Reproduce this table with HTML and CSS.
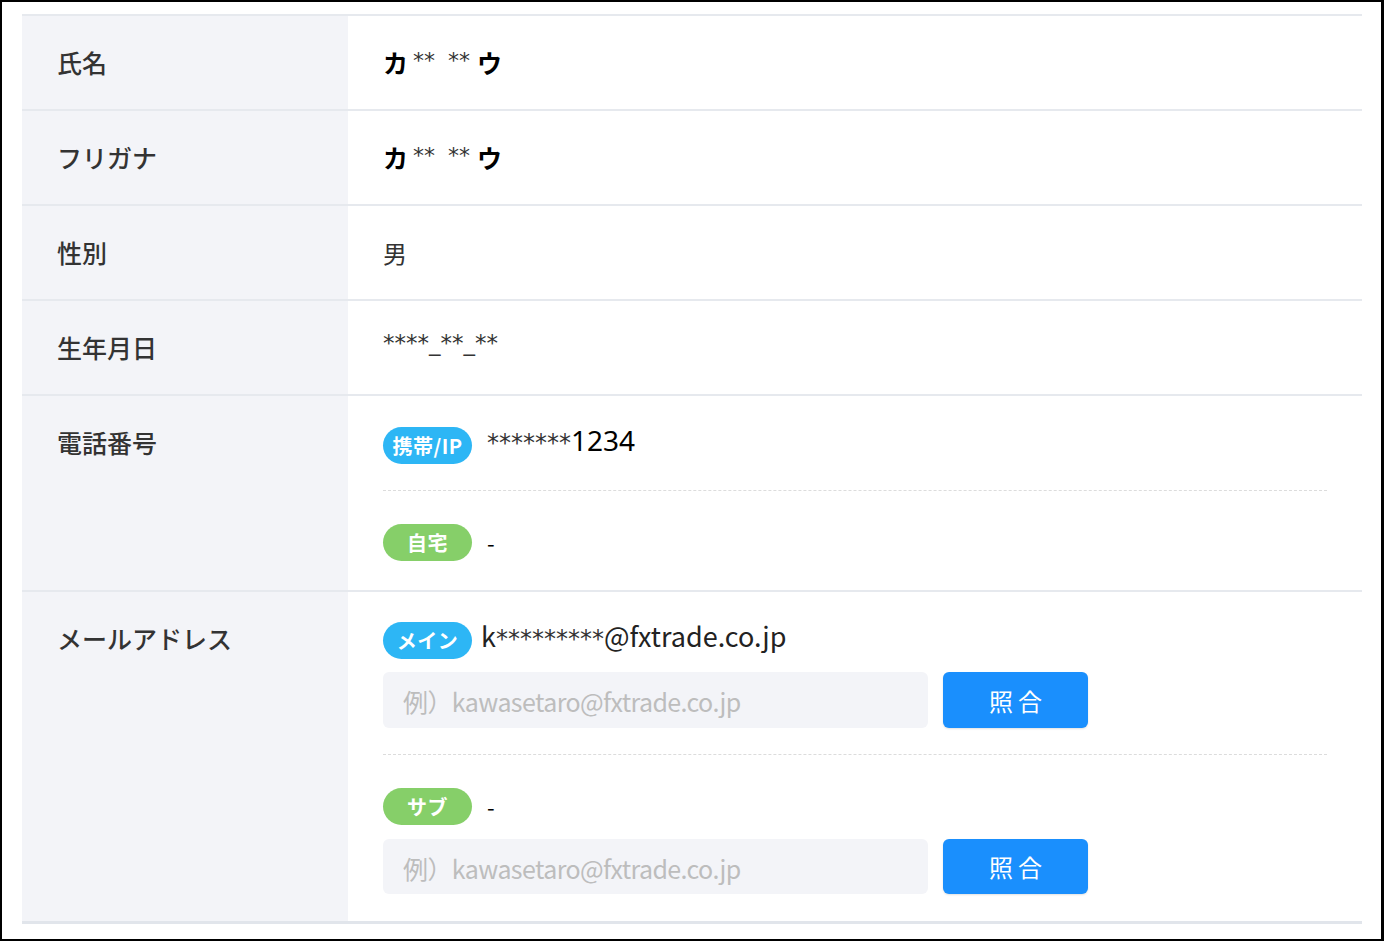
FILE: index.html
```html
<!DOCTYPE html>
<html lang="ja">
<head>
<meta charset="utf-8">
<link rel="stylesheet" href="styles.css">
</head>
<body>
<div class="frame">
  <div class="table">
    <div class="row">
      <div class="label">氏名</div>
      <div class="value"><span class="kana">カ</span><span class="mask">** **</span><span class="kana">ウ</span></div>
    </div>
    <div class="row">
      <div class="label">フリガナ</div>
      <div class="value"><span class="kana">カ</span><span class="mask">** **</span><span class="kana">ウ</span></div>
    </div>
    <div class="row">
      <div class="label">性別</div>
      <div class="value plain">男</div>
    </div>
    <div class="row">
      <div class="label">生年月日</div>
      <div class="value"><span class="date">****_**_**</span></div>
    </div>
    <div class="row">
      <div class="label">電話番号</div>
      <div class="value multi phone-list">
        <div class="item">
          <div class="line">
            <span class="badge blue">携帯/IP</span>
            <span class="phone"><span class="stars">*******</span><span class="digits">1234</span></span>
          </div>
        </div>
        <div class="item">
          <div class="line">
            <span class="badge green">自宅</span>
            <span class="dash">-</span>
          </div>
        </div>
      </div>
    </div>
    <div class="row">
      <div class="label">メールアドレス</div>
      <div class="value multi mail-list">
        <div class="item">
          <div class="line tall">
            <span class="badge blue">メイン</span>
            <span class="email">k<span class="stars">*********</span>@fxtrade.co.jp</span>
          </div>
          <div class="form">
            <input class="field" type="text" placeholder="例）kawasetaro@fxtrade.co.jp">
            <button class="btn" type="button">照合</button>
          </div>
        </div>
        <div class="item">
          <div class="line">
            <span class="badge green">サブ</span>
            <span class="dash">-</span>
          </div>
          <div class="form low">
            <input class="field" type="text" placeholder="例）kawasetaro@fxtrade.co.jp">
            <button class="btn" type="button">照合</button>
          </div>
        </div>
      </div>
    </div>
  </div>
</div>
</body>
</html>
```

FILE: styles.css
```css
* { box-sizing: border-box; }
html, body { margin: 0; padding: 0; background: #fff; }
body {
  font-family: "Noto Sans CJK JP", "Noto Sans", sans-serif;
  color: #333;
}
.frame {
  width: 1384px;
  height: 941px;
  border: 2px solid #000;
  border-right-width: 3px;
  padding: 12px 19px 0 20px;
  background: #fff;
}
.table {
  border-top: 2px solid #e6e9ee;
  border-bottom: 3px solid #e1e5eb;
}
.row {
  display: grid;
  grid-template-columns: 326px 1fr;
  border-bottom: 2px solid #e6e9ee;
}
.row:last-child { border-bottom: none; }
.label {
  background: #f3f4f8;
  padding: 30px 35px;
  font-size: 25px;
  line-height: 33px;
  font-weight: 500;
  color: #333;
}
.value {
  padding: 30px 35px;
  line-height: 33px;
  min-height: 93px;
  display: flex;
  align-items: center;
}
.value.multi {
  display: block;
  padding: 31px 35px 0 35px;
}
.value.mail-list { padding-top: 29px; }
.kana {
  font-size: 25px;
  font-weight: 700;
  color: #000;
}
.mask {
  font-family: "DejaVu Sans", sans-serif;
  font-size: 22px;
  color: #333;
  white-space: pre;
  word-spacing: 6px;
  margin: 0 7px 0 5px;
  position: relative;
  top: -2px;
}
.plain {
  font-size: 24px;
  color: #333;
}
.date {
  font-family: "DejaVu Sans", sans-serif;
  font-size: 23px;
  color: #333;
  position: relative;
  top: -4px;
}
.item {
  padding-bottom: 26px;
}
.item + .item {
  border-top: 1px dashed #dcdcdc;
  padding-top: 33px;
}
.phone-list .item + .item { padding-bottom: 29px; }
.mail-list .item + .item { padding-bottom: 27px; }
.line {
  display: flex;
  align-items: center;
  height: 37px;
}
.line.tall { height: 38px; }
.badge {
  flex: 0 0 auto;
  width: 89px;
  height: 37px;
  border-radius: 19px;
  color: #fff;
  font-size: 20px;
  font-weight: 700;
  line-height: 37px;
  text-align: center;
  letter-spacing: 0.5px;
}
.badge.blue { background: #2db6f5; }
.badge.green { background: #86cf69; }
.phone {
  margin-left: 15px;
  color: #000;
  position: relative;
  top: -3px;
  white-space: nowrap;
}
.stars {
  font-family: "DejaVu Sans", sans-serif;
  font-size: 24px;
  color: #333;
}
.digits {
  font-family: "Noto Sans", sans-serif;
  font-size: 28px;
  color: #000;
}
.dash {
  margin-left: 15px;
  font-size: 22px;
  color: #000;
}
.email {
  margin-left: 9px;
  font-size: 27px;
  color: #222;
  position: relative;
  top: -3px;
  white-space: nowrap;
}
.email .stars { font-size: 24px; }
.form {
  display: flex;
  gap: 15px;
  margin-top: 13px;
}
.form.low { margin-top: 14px; }
.form.low .field, .form.low .btn { height: 55px; }
.field {
  width: 545px;
  height: 56px;
  border: none;
  outline: none;
  border-radius: 6px;
  background: #f3f4f8;
  padding: 2px 20px 0 20px;
  font-family: "Noto Sans CJK JP", sans-serif;
  font-size: 25px;
  letter-spacing: -0.6px;
  color: #333;
}
.field::placeholder { color: #bdbdbd; }
.btn {
  width: 145px;
  height: 56px;
  border: none;
  border-radius: 6px;
  background: #1a8ffd;
  color: #fff;
  font-family: "Noto Sans CJK JP", sans-serif;
  font-size: 24px;
  letter-spacing: 5px;
  padding: 0 0 0 5px;
  box-shadow: 0 1px 2px rgba(0, 0, 0, 0.12);
}
```
